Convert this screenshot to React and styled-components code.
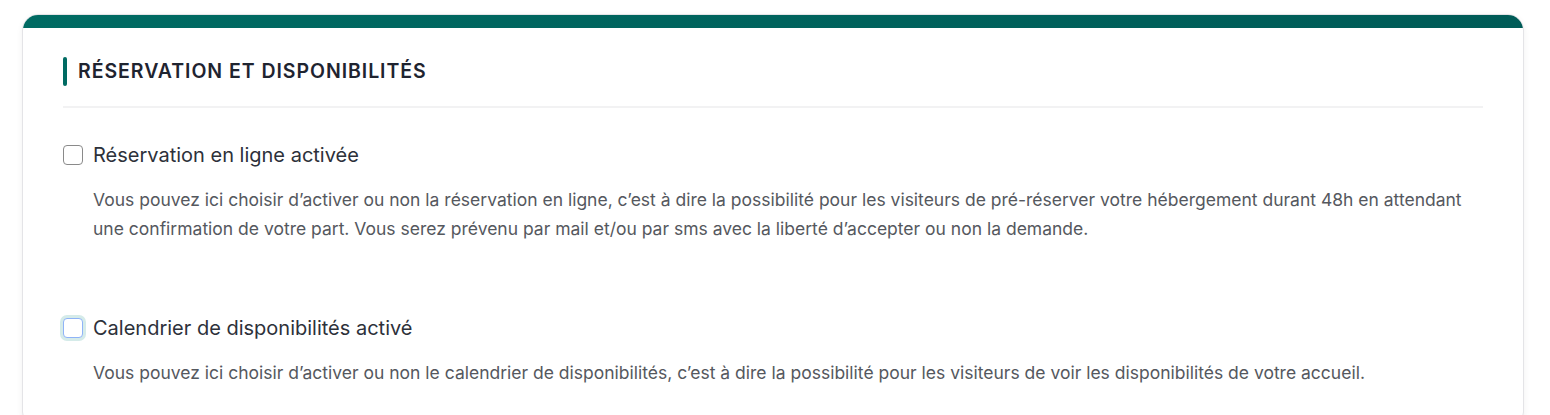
import React from "react";
import styled, { createGlobalStyle } from "styled-components";

const GlobalStyle = createGlobalStyle`
  body {
    margin: 0;
    background: #ffffff;
    font-family: Inter, "Noto Sans", sans-serif;
  }
`;

const Page = styled.div`
  padding: 14px 26px 0 22px;
`;

const Card = styled.section`
  background: #fff;
  border: 1px solid #e4e4e7;
  border-radius: 16px;
  box-shadow: 0 2px 6px rgba(0, 0, 0, 0.06);
  overflow: hidden;
`;

const TopBar = styled.div`
  height: 13px;
  background: linear-gradient(90deg, #006b63 0%, #005b57 100%);
`;

const Body = styled.div`
  padding: 29px 40px 40px 40px;
`;

const Header = styled.div`
  display: flex;
  align-items: center;
  gap: 11px;
  padding-bottom: 20px;
  border-bottom: 2px solid #f2f2f3;
`;

const Accent = styled.span`
  width: 4px;
  height: 29px;
  border-radius: 2px;
  background: #006b63;
`;

const Title = styled.h2`
  margin: 0;
  font-size: 19.5px;
  line-height: 29px;
  font-weight: 600;
  letter-spacing: 0.95px;
  color: #1f2430;
  text-transform: uppercase;
`;

const Option = styled.div`
  margin-top: ${(p) => p.$top}px;
`;

const CheckRow = styled.label`
  display: flex;
  align-items: center;
  gap: 10px;
  cursor: pointer;
`;

const Box = styled.span`
  box-sizing: border-box;
  width: 20px;
  height: 20px;
  border-radius: 4px;
  border: 1px solid ${(p) => (p.$focus ? "#8fb3f7" : "#8a8a8a")};
  background: #fff;
  box-shadow: ${(p) => (p.$focus ? "0 0 0 3px #d5ebe9" : "none")};
  flex-shrink: 0;
`;

const Label = styled.span`
  font-size: 20px;
  line-height: 24px;
  color: #2d313a;
`;

const Desc = styled.p`
  margin: 18px 0 0 30px;
  font-size: 17.5px;
  line-height: 29px;
  color: #55585e;
`;

const options = [
  {
    label: "Réservation en ligne activée",
    desc: "Vous pouvez ici choisir d’activer ou non la réservation en ligne, c’est à dire la possibilité pour les visiteurs de pré-réserver votre hébergement durant 48h en attendant une confirmation de votre part. Vous serez prévenu par mail et/ou par sms avec la liberté d’accepter ou non la demande.",
    top: 35,
  },
  {
    label: "Calendrier de disponibilités activé",
    desc: "Vous pouvez ici choisir d’activer ou non le calendrier de disponibilités, c’est à dire la possibilité pour les visiteurs de voir les disponibilités de votre accueil.",
    top: 73,
    focus: true,
  },
];

export default function App() {
  return (
    <>
      <GlobalStyle />
      <Page>
        <Card>
          <TopBar />
          <Body>
            <Header>
              <Accent />
              <Title>Réservation et disponibilités</Title>
            </Header>
            {options.map((o) => (
              <Option key={o.label} $top={o.top}>
                <CheckRow>
                  <Box $focus={o.focus} />
                  <Label>{o.label}</Label>
                </CheckRow>
                <Desc>{o.desc}</Desc>
              </Option>
            ))}
          </Body>
        </Card>
      </Page>
    </>
  );
}
